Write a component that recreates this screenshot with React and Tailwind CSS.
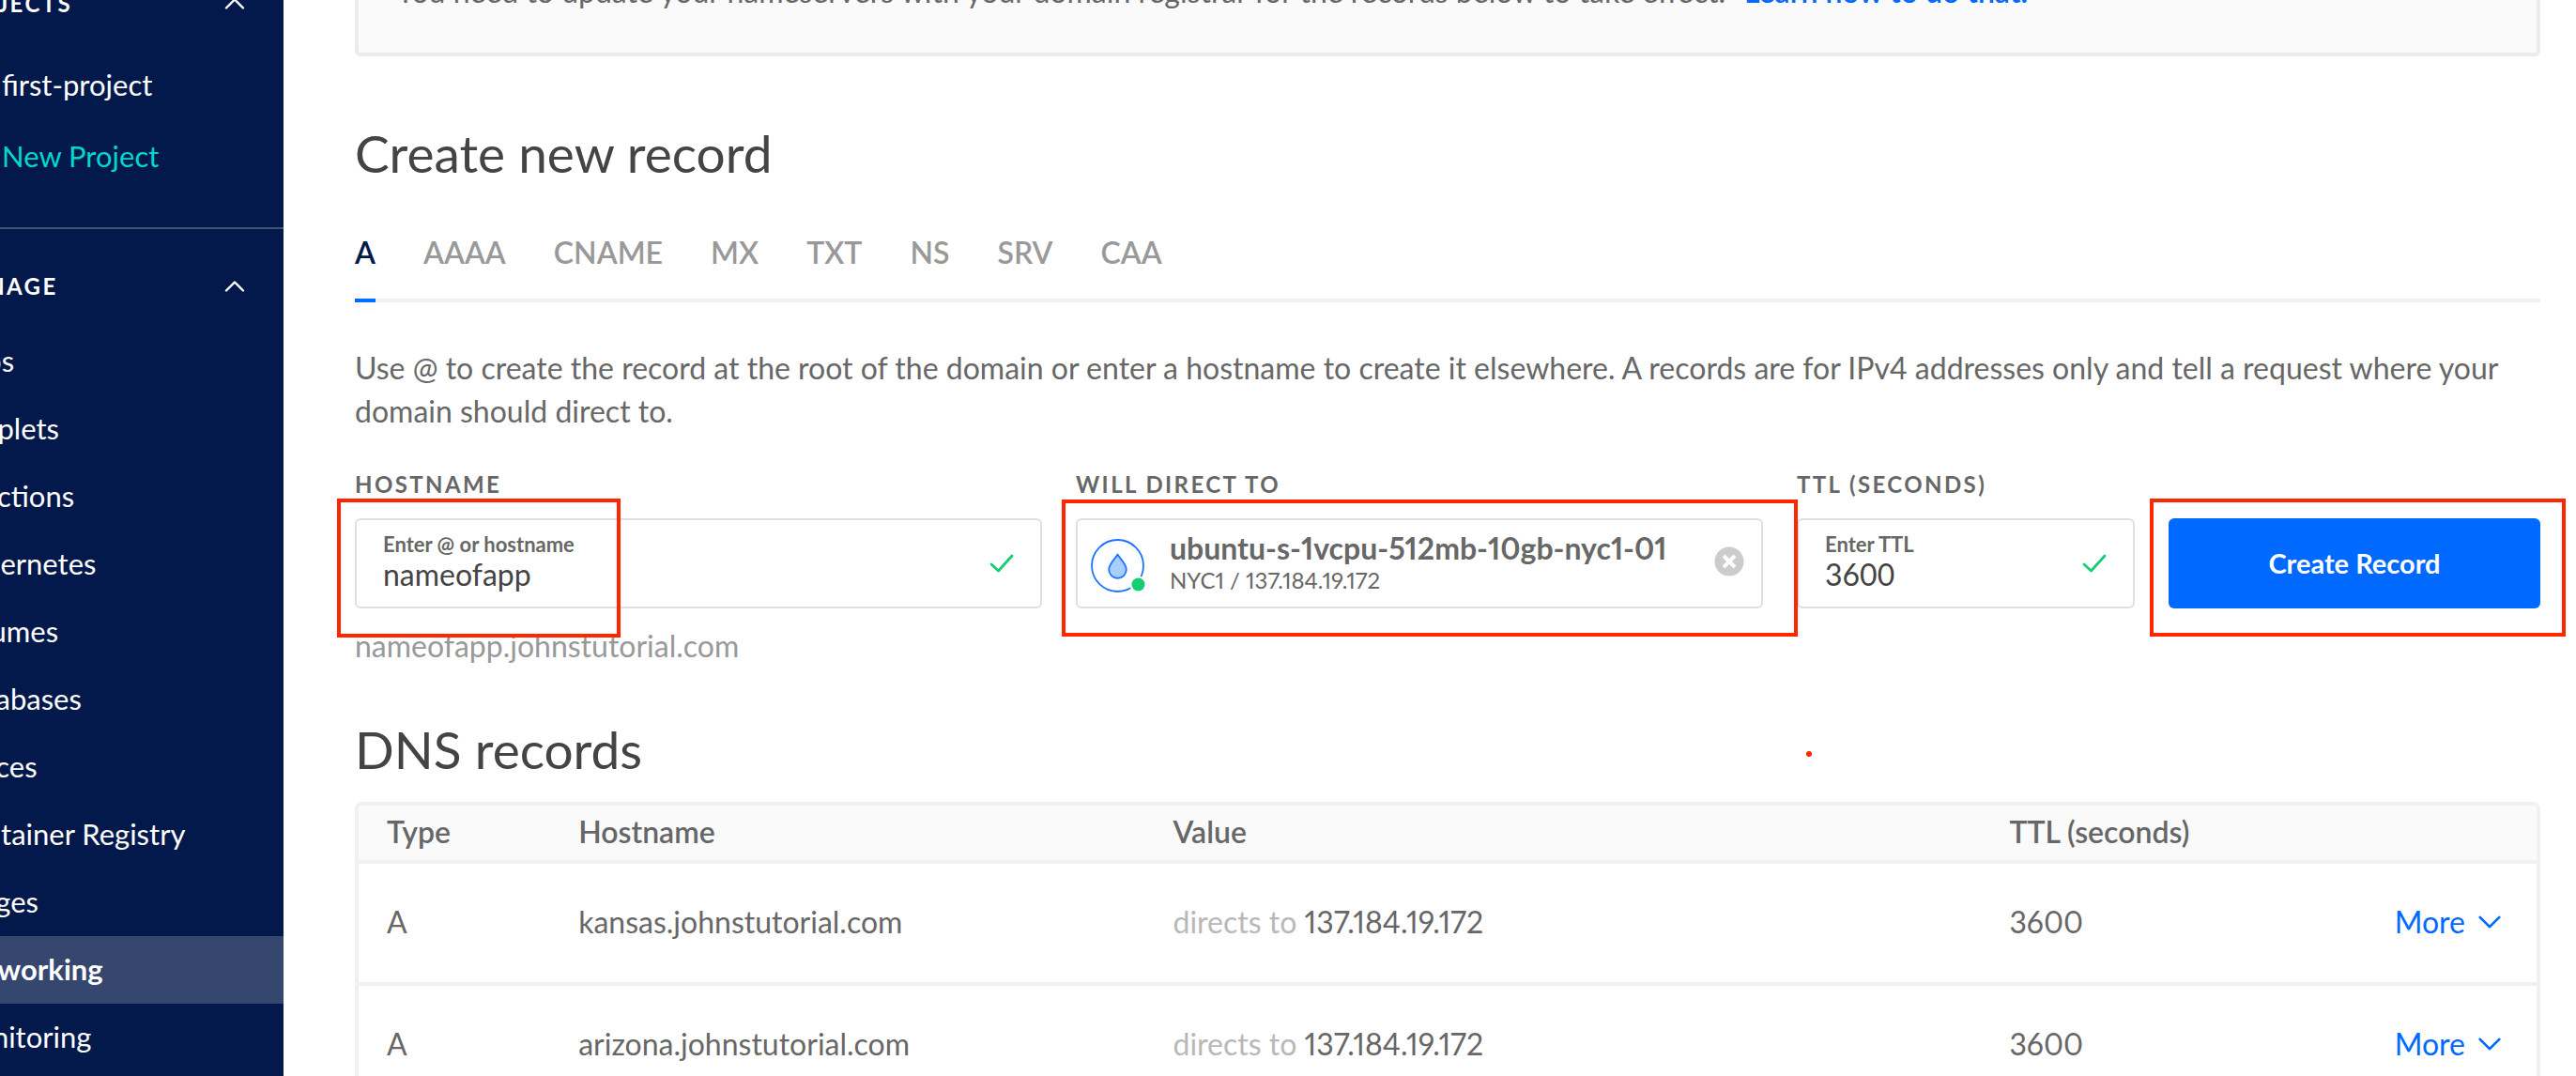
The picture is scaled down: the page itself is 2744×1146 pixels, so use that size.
const projects = [
  { label: "first-project", tone: "text-white" },
  { label: "New Project", tone: "text-[#00d7cc]" },
];

const services = [
  "Apps",
  "Droplets",
  "Functions",
  "Kubernetes",
  "Volumes",
  "Databases",
  "Spaces",
  "Container Registry",
  "Images",
  "Networking",
  "Monitoring",
];

const recordTypes = ["A", "AAAA", "CNAME", "MX", "TXT", "NS", "SRV", "CAA"];

const records = [
  { type: "A", host: "kansas.johnstutorial.com", ip: "137.184.19.172", ttl: 3600 },
  { type: "A", host: "arizona.johnstutorial.com", ip: "137.184.19.172", ttl: 3600 },
];

function Chevron({ className }) {
  return (
    <svg viewBox="0 0 24 14" fill="none" stroke="currentColor" strokeWidth="2.4" strokeLinecap="round" strokeLinejoin="round" className={className} aria-hidden="true">
      <path d="M3 2.500 12 11.500 21 2.500" />
    </svg>
  );
}

function Check() {
  return (
    <svg viewBox="0 0 26 20" fill="none" stroke="#15cd72" strokeWidth="2.8" strokeLinecap="round" strokeLinejoin="round" className="h-5 w-[26px] shrink-0" aria-hidden="true">
      <path d="M2 11 9.5 18 24 2" />
    </svg>
  );
}

function DropletIcon() {
  return (
    <svg viewBox="0 0 60 64" fill="none" className="h-16 w-15 shrink-0" aria-hidden="true">
      <circle cx="28.500" cy="34.500" r="27.500" stroke="#1f74ff" strokeWidth="1.800" />
      <path d="M28.500 22.500c3.500 5.500 9.300 10.500 9.300 16a9.300 9.300 0 0 1-18.600 0c0-5.500 5.800-10.500 9.300-16Z" fill="#a8cdff" stroke="#1f74ff" strokeWidth="1.800" strokeLinejoin="round" />
      <circle cx="50.500" cy="54.500" r="9" fill="#fff" />
      <circle cx="50.500" cy="54.500" r="7" fill="#15cd72" />
    </svg>
  );
}

function ClearIcon() {
  return (
    <svg viewBox="0 0 32 32" className="size-8" aria-hidden="true">
      <circle cx="16" cy="16" r="15.500" fill="#ccc" />
      <path d="m10 10 12 12M22 10 10 22" stroke="#fff" strokeWidth="4" />
    </svg>
  );
}

function SectionHeader({ title, className }) {
  return (
    <button type="button" className={`-ml-[58px] flex h-12 w-[360px] shrink-0 items-center justify-between pr-10 text-2xl font-bold tracking-widest text-white uppercase ${className}`}>
      <span>{title}</span>
      <Chevron className="h-[14px] w-6 rotate-180" />
    </button>
  );
}

function Sidebar() {
  return (
    <aside className="flex w-[302px] shrink-0 flex-col overflow-hidden bg-[#03194b] text-[31px]">
      <SectionHeader title="Projects" className="-mt-5" />
      <ul className="mt-6">
        {projects.map((p) => (
          <li key={p.label} className="flex h-[76px] items-center pl-[2px]">
            <a href="#" className={p.tone}>{p.label}</a>
          </li>
        ))}
      </ul>
      <hr className="mt-[38px] border-t-2 border-[#42517a]" />
      <SectionHeader title="Manage" className="mt-[37px]" />
      <ul className="mt-5">
        {services.map((s) => (
          <li key={s} className={`flex h-18 items-center pb-[2px] ${s === "Networking" ? "bg-[#35476f] font-bold" : ""}`}>
            <a href="#" className="-ml-[54px] whitespace-nowrap text-white">{s}</a>
          </li>
        ))}
      </ul>
    </aside>
  );
}

function TextField({ id, hint, value }) {
  return (
    <div className="flex h-24 items-center rounded-md border-2 border-[#dfdfdf] px-7">
      <div className="min-w-0 flex-1">
        <label htmlFor={id} className="block text-[22px] leading-6 font-bold text-[#676767]">{hint}</label>
        <input id={id} type="text" defaultValue={value} className="block h-10 w-full bg-transparent text-[32px] leading-10 text-[#444] outline-none" />
      </div>
      <Check />
    </div>
  );
}

const fieldLabel = "mb-5 block text-2xl leading-8 font-bold tracking-widest text-[#676767] uppercase";

function RecordForm() {
  return (
    <form className="relative mt-[39px] grid grid-cols-[732fr_732fr_360fr_396fr] gap-9">
      <div>
        <label htmlFor="hostname" className={fieldLabel}>Hostname</label>
        <TextField id="hostname" hint="Enter @ or hostname" value="nameofapp" />
        <p className="mt-5 text-[32px] leading-10 text-[#999]">nameofapp.johnstutorial.com</p>
        <Highlight className="top-[31px] -left-[19px] h-[148px] w-[302px]" />
      </div>
      <div className="relative">
        <span className={fieldLabel}>Will direct to</span>
        <div className="flex h-24 items-center rounded-md border-2 border-[#dfdfdf] pr-[18px] pl-[14px]">
          <DropletIcon />
          <div className="ml-6 flex-1 text-[#676767] proportional-nums">
            <p className="text-[32px] leading-8 font-bold">ubuntu-s-1vcpu-512mb-10gb-nyc1-01</p>
            <p className="mt-1 text-2xl leading-7">NYC1 / 137.184.19.172</p>
          </div>
          <button type="button" aria-label="Clear selection" className="pb-1"><ClearIcon /></button>
        </div>
        <Highlight className="top-8 -right-[37px] -left-[15px] h-[146px]" />
      </div>
      <div>
        <label htmlFor="ttl" className={fieldLabel}>TTL (seconds)</label>
        <TextField id="ttl" hint="Enter TTL" value="3600" />
      </div>
      <div className="relative pt-[52px]">
        <button type="submit" className="h-24 w-full rounded-md bg-[#0069ff] text-[29px] font-bold text-white">Create Record</button>
        <Highlight className="top-[31px] -right-[27px] -left-5 h-[147px]" />
      </div>
    </form>
  );
}

function Highlight({ className }) {
  return <div className={`pointer-events-none absolute z-10 border-4 border-[#ff2600] ${className}`} />;
}

const cell = "border-b-4 border-[#f1f1f1] pb-[3px] pl-[30px]";

function RecordsTable() {
  return (
    <div className="mt-[26px] overflow-hidden rounded-lg border-4 border-[#f1f1f1]">
      <table className="w-full table-fixed border-separate border-spacing-0 text-left text-[32px] leading-10 text-[#676767] proportional-nums">
        <colgroup>
          <col className="w-[8.8%]" />
          <col className="w-[27.3%]" />
          <col className="w-[38.4%]" />
          <col className="w-[15%]" />
          <col />
        </colgroup>
        <thead>
          <tr className="h-[62px] bg-[#fafafa]">
            {["Type", "Hostname", "Value", "TTL (seconds)"].map((h, i) => (
              <th key={h} colSpan={i === 3 ? 2 : 1} className={`${cell} font-semibold`}>{h}</th>
            ))}
          </tr>
        </thead>
        <tbody>
          {records.map((r) => (
            <tr key={r.host} className="h-[130px]">
              <td className={cell}>{r.type}</td>
              <td className={cell}>{r.host}</td>
              <td className={cell}><span className="text-[#b8b8b8]">directs to</span> {r.ip}</td>
              <td className={cell}>{r.ttl}</td>
              <td className={`${cell} pr-9 text-right`}>
                <button type="button" className="inline-flex items-center gap-3 text-[#0069ff]">
                  More
                  <Chevron className="h-4 w-7" />
                </button>
              </td>
            </tr>
          ))}
        </tbody>
      </table>
    </div>
  );
}

export default function App() {
  return (
    <div className="flex h-screen overflow-hidden bg-white font-['Lato',sans-serif]">
      <Sidebar />
      <main className="min-w-0 flex-1 overflow-hidden pr-[38px] pl-19">
        <div className="-mt-20 rounded-md border-4 border-[#ececec] bg-[#fafafa] px-10 pt-11 pb-[42px] text-[32px] leading-[46px] text-[#676767]">
          You need to update your nameservers with your domain registrar for the records below to take effect.
          <a href="#" className="ml-5 font-semibold text-[#0069ff]">Learn how to do that.</a>
        </div>
        <h2 className="mt-[73px] text-[55px] leading-[60px] text-[#444]">Create new record</h2>
        <div role="tablist" className="mt-14 flex gap-[51px] border-b-4 border-[#f1f1f1]">
          {recordTypes.map((t, i) => (
            <button
              key={t}
              type="button"
              role="tab"
              aria-selected={i === 0}
              className={`-mb-1 border-b-4 pb-[29px] text-[32px] leading-10 font-semibold ${i === 0 ? "border-[#0069ff] text-[#03194b]" : "border-transparent text-[#999]"}`}
            >
              {t}
            </button>
          ))}
        </div>
        <p className="mt-[47px] text-[32px] leading-[46px] text-[#676767]">
          Use @ to create the record at the root of the domain or enter a hostname to create it elsewhere. A records are for IPv4 addresses only and tell a request where your domain should direct to.
        </p>
        <RecordForm />
        <div className="relative mt-15">
          <h2 className="text-[55px] leading-[60px] text-[#444]">DNS records</h2>
          <span className="absolute top-8 left-[66.4%] size-[6px] rounded-full bg-[#ff2600]" />
        </div>
        <RecordsTable />
      </main>
    </div>
  );
}
